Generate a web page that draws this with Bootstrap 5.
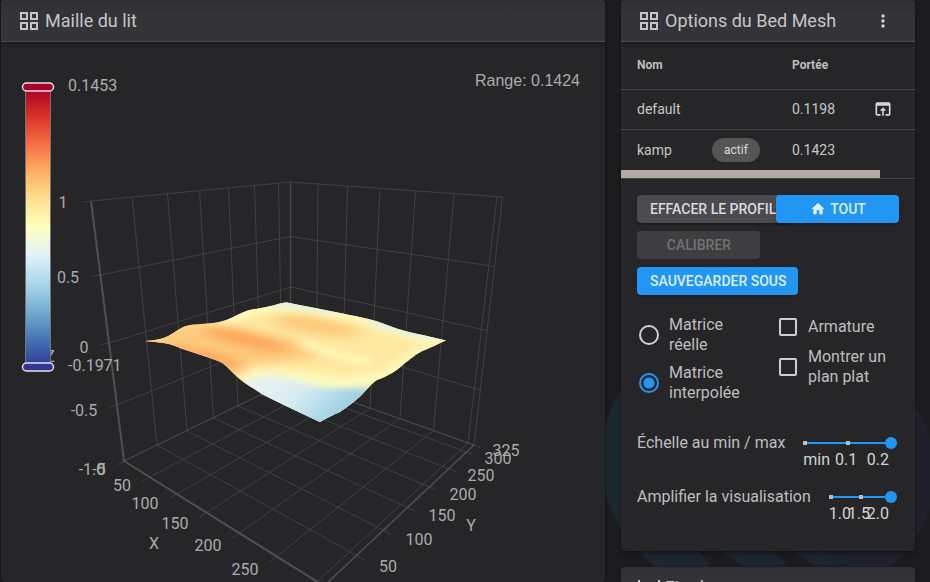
<!DOCTYPE html>
<html lang="fr" data-bs-theme="dark">
<head>
<meta charset="utf-8">
<meta name="viewport" content="width=device-width, initial-scale=1">
<title>Maille du lit</title>
<link href="https://cdn.jsdelivr.net/npm/bootstrap@5.3.0/dist/css/bootstrap.min.css" rel="stylesheet">
<style>
body{background:#1c1c1f;color:#bebebf;font-family:Roboto,sans-serif;font-size:16px;line-height:20px}
.shell{position:relative;height:100vh;overflow:hidden;padding:0 15px 0 1px}
.backdrop-art{position:absolute;right:0;top:300px;width:330px;height:300px}
.panes{display:grid;grid-template-columns:minmax(0,1fr) 294px;gap:16px;position:relative;align-items:start}
.pane{background:#262628;border:0;border-radius:4px;overflow:hidden;color:inherit;box-shadow:0 2px 4px rgba(0,0,0,.4)}
.pane-head{background:linear-gradient(#2f2e33,#343338 35%);border-bottom:1px solid #4a4a4d;height:42px;padding:0 16px;gap:4px;color:#c6c6c7;box-shadow:0 2px 5px rgba(0,0,0,.35);position:relative}
.pane-head h2{font-size:18px;line-height:24px;font-weight:400;margin:0;color:inherit}
svg.ico{fill:currentColor;flex:none}
.bare{background:none;border:0;padding:0;color:#d6d6d6;display:inline-flex;align-items:center;justify-content:center;width:32px;height:32px}
.plot{display:block;width:100%;height:auto}
.plot text{fill:#ababac;font-size:16px}
.profiles{margin:0;table-layout:fixed;--bs-table-bg:transparent;--bs-table-color:#c6c6c7;border-color:#464648;font-size:14px}
.profiles th,.profiles td{padding:0 0 0 16px;vertical-align:middle;border-bottom-width:1px}
.profiles th{height:47px;font-size:12px;color:#bdbdbe;font-weight:700}
.profiles td{height:40px}
.profiles td:last-child{padding:0 16px 0 0}
.profiles tbody tr:last-child td{border-bottom:0;height:41px}
.w-name{width:75px}.w-state{width:80px}.w-range{width:83px}
.chip{background:#555;color:#dadada;font-size:12px;line-height:24px;padding:0 12px}
.hscroll{height:9px;border-bottom:1px solid #464648}
.hscroll div{width:88%;height:8px;background:#b1aba3}
.pane-main{padding:16px 16px 26px}
.two-col{display:grid;grid-template-columns:minmax(0,1fr) minmax(0,1fr);column-gap:16px;row-gap:8px}
.act{height:28px;min-width:100%;width:max-content;padding:0 12px 0 13px;border:0;border-radius:4px;font-size:14px;line-height:28px;font-weight:500;color:#dadadb;background:#4b4b4f;text-transform:uppercase;white-space:nowrap;box-shadow:0 2px 2px rgba(0,0,0,.25)}
.act-blue,.act-blue:hover{background:#2196f3;color:#dceefd}
.act:disabled{background:#3e3e40;color:#727274;opacity:1;box-shadow:none}
.picks{margin-top:20px;align-items:start}
.picks>div{display:grid;gap:8px}
.pick{display:flex;align-items:center;gap:8px;min-height:24px;padding:0;margin:0}
.pick .form-check-input{float:none;flex:none;margin:0 2px;width:20px;height:20px;border:2px solid #cfcfcf;background-color:transparent}
.pick .form-check-input[type=checkbox]{margin:0 3px;width:18px;height:18px;border-radius:2px}
.pick .form-check-input:checked{border-color:#2196f3;background:radial-gradient(#2196f3 5px,transparent 6px)}
.sliders{margin-top:30px;display:grid;gap:16px}
.slide-row{display:flex;min-height:38px;gap:14px}
.slide-row label{flex:none;white-space:nowrap}
.scale{flex:1;min-width:0;position:relative;padding-top:4px;margin-right:2px}
.scale input{display:block;width:100%;height:12px;margin:0;appearance:none;background:linear-gradient(#2196f3,#2196f3) center/calc(100% - 12px) 2px no-repeat}
.scale input::-webkit-slider-thumb{appearance:none;width:12px;height:12px;border-radius:50%;background:#2196f3;position:relative}
.tick{position:absolute;top:8px;left:4px;width:4px;height:4px;background:#b4c0c8}
.tick-mid{left:calc(50% - 2px)}
.steps{display:grid;padding:1px 8px 0 4px;color:#d4d4d4;line-height:20px}
.steps span{grid-area:1/1;justify-self:start}
.steps span:nth-child(2){justify-self:center}
.steps span:nth-child(3){justify-self:end}
</style>
</head>
<body>
<div class="shell">
<svg class="backdrop-art" viewBox="600 300 330 300" aria-hidden="true">
  <defs><linearGradient id="art" gradientUnits="userSpaceOnUse" x1="600" y1="0" x2="935" y2="0"><stop offset="0" stop-color="#1b282e"/><stop offset=".45" stop-color="#1c242d"/><stop offset="1" stop-color="#20202a"/></linearGradient></defs>
  <circle cx="734" cy="459" r="133" fill="url(#art)"/><circle cx="814" cy="473" r="121" fill="url(#art)"/>
  <path d="M697 548h20l32 24h-34zM772 548h16l34 24h-30z" fill="#1c1c1f"/>
</svg>
<main class="panes">
  <section class="card pane">
    <header class="pane-head d-flex align-items-center">
      <svg class="ico" width="24" height="24" viewBox="0 0 24 24"><path d="M3 3v8h8V3zm6 6H5V5h4zM3 21h8v-8H3zm2-6h4v4H5zm8-12v8h8V3zm6 6h-4V5h4zm-6 12h8v-8h-8zm2-6h4v4h-4z"/></svg>
      <h2>Maille du lit</h2>
    </header>
    <svg class="plot" viewBox="1 42 604 540" role="img" aria-label="Maille du lit">
      <defs>
        <linearGradient id="ramp" x1="0" y1="0" x2="0" y2="1"><stop offset="0" stop-color="#a50026"/><stop offset=".1" stop-color="#d73027"/><stop offset=".2" stop-color="#f46d43"/><stop offset=".3" stop-color="#fdae61"/><stop offset=".4" stop-color="#fee090"/><stop offset=".5" stop-color="#ffffbf"/><stop offset=".6" stop-color="#e0f3f8"/><stop offset=".7" stop-color="#abd9e9"/><stop offset=".8" stop-color="#74add1"/><stop offset=".9" stop-color="#4575b4"/><stop offset="1" stop-color="#313695"/></linearGradient>
        <filter id="soft" color-interpolation-filters="sRGB" x="-30%" y="-60%" width="160%" height="220%"><feGaussianBlur stdDeviation="9 5"/></filter>
        <filter id="soft3" color-interpolation-filters="sRGB" x="-30%" y="-60%" width="160%" height="220%"><feGaussianBlur stdDeviation="5 3"/></filter>
        <linearGradient id="cool" gradientUnits="userSpaceOnUse" x1="285" y1="376" x2="330" y2="420"><stop offset="0" stop-color="#e4f1f0"/><stop offset=".4" stop-color="#d3eaf2"/><stop offset="1" stop-color="#9fd2e4"/></linearGradient>
        <clipPath id="sheet"><path d="M145 341Q158 340 165 337.500C174 334 180 327 188 325.500C198 323.500 214 324 223 321C234 318 240 312 252 309.500C262 308 272 306 278 304Q284 302 287 302.500C305 306 325 310 345 314C360 317 375 320 387 325C400 330 412 333 425 335.500L446 340.500C436 345 430 348 425 350C415 354 410 360 405 363C398 370 388 376 377 380C370 384 364 394 357 399C350 405 344 409 340 412C333 415 326 418 320 422L284 405L262 394C250 386 242 382 234 374C228 368 224 363 218 361C206 356 190 352 175 346C168 343 156 342 145 341Z"/></clipPath>
      </defs>
      <g fill="none" stroke="#414144">
        <path d="M83 202L91 201L290 182L502.500 197M92 276.500L100 275L290 236.500L495 266.500M101 345L109 343L291 287L487 330.500M109 407L117 405L291 334L480 390M117 465L124 461"/>
        <path d="M132 197L157 445M167.500 194L187 431M199.500 191L213.500 418M228.500 188L238 406M254.500 185.500L261 395M278.500 183L282 385M318 184L316 389M347.500 186L342 399M380 188.500L370 408M415.500 191L400 418.500M454 194L433.500 430.500M497 196.500L468 443M502.500 197L474 445"/>
        <path d="M157 445L365 560M187 431L391 534M213.500 418L415 511M238 406L436 490M261 395L455.500 471.500M282 385L472 454M142.500 481L316 389M170 498L342 399M200 517L370 408M232.500 538L400 418.500M270 562L433.500 430.500M308 590L468 443M474 445L480 447"/>
      </g>
      <g fill="none" stroke="#505053"><path stroke-width="2" d="M91 201L124 461L324 586"/><path stroke="#464649" stroke-width="1.500" d="M290.500 182V380"/><path d="M124 461L291 380L474 445"/><path stroke-width="1.500" d="M474 445L324 586"/></g>
      <g clip-path="url(#sheet)">
        <path d="M140 295H450V425H140z" fill="#fee9a1"/>
        <g filter="url(#soft)">
          <path d="M140 334L200 320L236 328L290 341L325 356L290 362L236 368L222 368L140 346z" fill="#fdcb7e"/>
          <ellipse cx="248" cy="339" rx="44" ry="7" transform="rotate(11 248 339)" fill="#fda256"/>
          <ellipse cx="266" cy="345" rx="22" ry="6" transform="rotate(8 266 345)" fill="#fda85c"/>
          <path d="M150 343L214 352L242 364L238 376L210 364L150 350z" fill="#fda55c"/>
          <ellipse cx="316" cy="326" rx="44" ry="8" transform="rotate(10 316 326)" fill="#fdc878"/>
          <path d="M238 374L256 366L300 371L345 378L385 370L425 345L470 350L400 440H260z" fill="#fdfbbf"/>
        </g>
        <g filter="url(#soft3)">
          <path d="M240 384L258 377L275 375L300 382L324 388L368 388L385 390L370 440L300 440z" fill="url(#cool)"/>
          <path d="M212 322L250 300L290 292L350 305L394 319L460 337L460 346L420 343L380 331L350 320L295 311L262 313L240 321z" fill="#fef8bc"/>
          <path d="M258 304L286 294L346 307L332 313L294 308zM360 313L393 322L455 338L450 342L415 336L376 326z" fill="#dfefe8"/>
          <path d="M305 343Q335 358 371 362" fill="none" stroke="#fff8b6" stroke-width="8"/>
          <path d="M140 341L160 339L172 342L162 345z" fill="#fedf91"/>
        </g>
      </g>
      <g text-anchor="middle">
        <text x="63" y="208">1</text><text x="68" y="283">0.5</text><text x="84" y="353">0</text><text x="84" y="416">-0.5</text>
        <text x="92" y="475">-1.0</text><text x="99" y="475">-5</text><text x="101" y="475">0</text>
        <text x="122" y="491">50</text><text x="145" y="509">100</text><text x="175" y="529">150</text><text x="208" y="551">200</text><text x="245" y="575">250</text><text x="154" y="549">X</text>
        <text x="388" y="572">50</text><text x="419" y="545">100</text><text x="442" y="521">150</text><text x="463" y="500">200</text><text x="481" y="481">250</text><text x="498" y="464">300</text><text x="506" y="456">325</text><text x="471" y="531">Y</text><text x="50" y="362">Z</text>
      </g>
      <path d="M25.500 87H50.500V367H25.500z" fill="url(#ramp)" stroke="#77727a"/>
      <g stroke="#e4dfe6" stroke-width="1.500"><rect x="22.500" y="83" width="31" height="8" rx="4" fill="#a50026"/><rect x="22.500" y="363" width="31" height="8" rx="4" fill="#313695"/></g>
      <text x="68" y="91">0.1453</text><text x="68" y="371">-0.1971</text>
      <text x="580" y="86" text-anchor="end" style="font-family:'Liberation Sans',sans-serif">Range: 0.1424</text>
    </svg>
  </section>

  <div class="d-grid gap-3">
    <section class="card pane">
      <header class="pane-head d-flex align-items-center">
        <svg class="ico" width="24" height="24" viewBox="0 0 24 24"><path d="M3 3v8h8V3zm6 6H5V5h4zM3 21h8v-8H3zm2-6h4v4H5zm8-12v8h8V3zm6 6h-4V5h4zm-6 12h8v-8h-8zm2-6h4v4h-4z"/></svg>
        <h2>Options du Bed Mesh</h2>
        <button class="bare ms-auto" type="button" aria-label="Menu"><svg class="ico" width="20" height="20" viewBox="0 0 24 24"><path d="M12 16a2 2 0 0 1 2 2 2 2 0 0 1-2 2 2 2 0 0 1-2-2 2 2 0 0 1 2-2m0-6a2 2 0 0 1 2 2 2 2 0 0 1-2 2 2 2 0 0 1-2-2 2 2 0 0 1 2-2m0-6a2 2 0 0 1 2 2 2 2 0 0 1-2 2 2 2 0 0 1-2-2 2 2 0 0 1 2-2z"/></svg></button>
      </header>
      <table class="table profiles">
        <thead><tr><th class="w-name" scope="col">Nom</th><th class="w-state"></th><th class="w-range" scope="col">Portée</th><th></th></tr></thead>
        <tbody>
          <tr><td>default</td><td></td><td>0.1198</td><td class="text-end"><button class="bare" type="button" aria-label="Charger default"><svg class="ico" width="20" height="20" viewBox="0 0 24 24"><path d="M12 10l-4 4h3v6h2v-6h3M19 4H5a2 2 0 0 0-2 2v12a2 2 0 0 0 2 2h4v-2H5V8h14v10h-4v2h4a2 2 0 0 0 2-2V6a2 2 0 0 0-2-2z"/></svg></button></td></tr>
          <tr><td>kamp</td><td><span class="chip rounded-pill d-inline-block">actif</span></td><td>0.1423</td><td></td></tr>
        </tbody>
      </table>
      <div class="hscroll"><div></div></div>
      <div class="pane-main">
        <div class="two-col">
          <button class="btn act" type="button">Effacer le profil</button>
          <button class="btn act act-blue d-flex align-items-center justify-content-center gap-1 position-relative" type="button"><svg class="ico" width="16" height="16" viewBox="0 0 24 24"><path d="M10 20v-6h4v6h5v-8h3L12 3 2 12h3v8z"/></svg>Tout</button>
          <button class="btn act" type="button" disabled>Calibrer</button><span></span>
          <button class="btn act act-blue" type="button">Sauvegarder sous</button>
        </div>
        <div class="two-col picks">
          <div>
            <div class="form-check pick"><input class="form-check-input" type="radio" name="matrix" id="m1"><label for="m1">Matrice réelle</label></div>
            <div class="form-check pick"><input class="form-check-input" type="radio" name="matrix" id="m2" checked><label for="m2">Matrice interpolée</label></div>
          </div>
          <div>
            <div class="form-check pick"><input class="form-check-input" type="checkbox" id="c1"><label for="c1">Armature</label></div>
            <div class="form-check pick"><input class="form-check-input" type="checkbox" id="c2"><label for="c2">Montrer un plan plat</label></div>
          </div>
        </div>
        <div class="sliders">
          <div class="slide-row"><label for="s1">Échelle au min / max</label>
            <div class="scale"><input id="s1" type="range" min="0" max="0.2" step="0.1" value="0.2"><i class="tick"></i><i class="tick tick-mid"></i><div class="steps"><span>min</span><span>0.1</span><span>0.2</span></div></div></div>
          <div class="slide-row"><label for="s2">Amplifier la visualisation</label>
            <div class="scale"><input id="s2" type="range" min="1" max="2" step="0.5" value="2"><i class="tick"></i><i class="tick tick-mid"></i><div class="steps"><span>1.0</span><span>1.5</span><span>2.0</span></div></div></div>
        </div>
      </div>
    </section>
    <section class="card pane">
      <header class="pane-head d-flex align-items-center">
        <svg class="ico" width="24" height="24" viewBox="0 0 24 24"><path d="M9 11h6V8l4 4-4 4v-3H9v3l-4-4 4-4zM1 20V4h2v16zM21 20V4h2v16z"/></svg>
        <h2>Fin de course</h2>
      </header>
    </section>
  </div>
</main>
</div>
<script src="https://cdn.jsdelivr.net/npm/bootstrap@5.3.0/dist/js/bootstrap.bundle.min.js"></script>
</body>
</html>
